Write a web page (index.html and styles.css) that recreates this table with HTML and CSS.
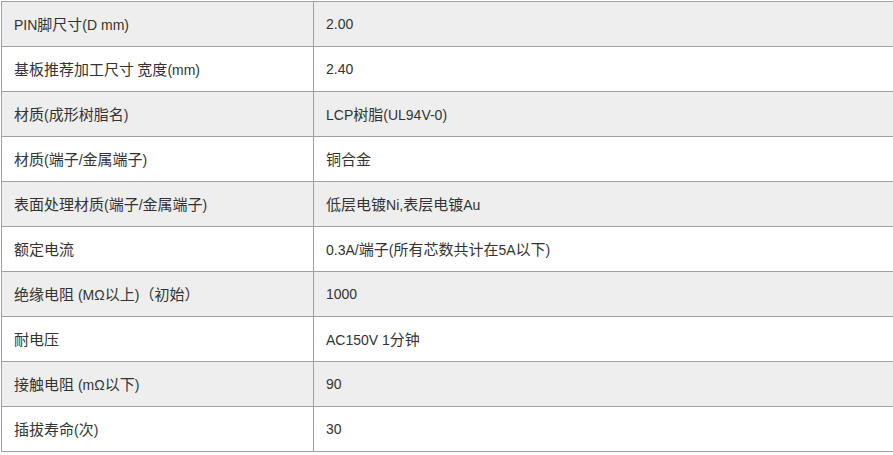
FILE: index.html
```html
<!DOCTYPE html>
<html>
<head>
<meta charset="utf-8">
<link rel="stylesheet" href="styles.css">
</head>
<body>
<table class="spec">
  <colgroup><col class="c1"><col class="c2"></colgroup>
  <tr><td>PIN<span class="zh">脚尺寸</span>(D mm)</td><td>2.00</td></tr>
  <tr><td><span class="zh">基板推荐加工尺寸 宽度</span>(mm)</td><td>2.40</td></tr>
  <tr><td><span class="zh">材质</span>(<span class="zh">成形树脂名</span>)</td><td>LCP<span class="zh">树脂</span>(UL94V-0)</td></tr>
  <tr><td><span class="zh">材质</span>(<span class="zh">端子</span>/<span class="zh">金属端子</span>)</td><td><span class="zh">铜合金</span></td></tr>
  <tr><td><span class="zh">表面处理材质</span>(<span class="zh">端子</span>/<span class="zh">金属端子</span>)</td><td><span class="zh">低层电镀</span>Ni,<span class="zh">表层电镀</span>Au</td></tr>
  <tr><td><span class="zh">额定电流</span></td><td>0.3A/<span class="zh">端子</span>(<span class="zh">所有芯数共计在</span>5A<span class="zh">以下</span>)</td></tr>
  <tr><td><span class="zh">绝缘电阻</span> (MΩ<span class="zh">以上</span>)<span class="zh">（初始）</span></td><td>1000</td></tr>
  <tr><td><span class="zh">耐电压</span></td><td>AC150V 1<span class="zh">分钟</span></td></tr>
  <tr><td><span class="zh">接触电阻</span> (mΩ<span class="zh">以下</span>)</td><td>90</td></tr>
  <tr><td><span class="zh">插拔寿命</span>(<span class="zh">次</span>)</td><td>30</td></tr>
</table>
</body>
</html>
```
FILE: styles.css
```css
html, body {
  margin: 0;
  padding: 0;
  background: #fff;
}
body {
  padding: 1px 0 0 1px;
  font-family: "Liberation Sans", Arial, "Noto Sans CJK SC", sans-serif;
  font-size: 14px;
  color: #333;
}
.spec {
  border-collapse: collapse;
  width: 893px;
  table-layout: fixed;
}
.spec .c1 { width: 312px; }
.spec td {
  border: 1px solid #a0a0a0;
  height: 45px;
  padding: 0 12px;
  box-sizing: border-box;
  vertical-align: middle;
  line-height: 20px;
}
.spec tr:nth-child(odd) td {
  background: #eeeeee;
}
.zh {
  font-family: "Noto Sans CJK SC", sans-serif;
  font-size: 15px;
}
```
